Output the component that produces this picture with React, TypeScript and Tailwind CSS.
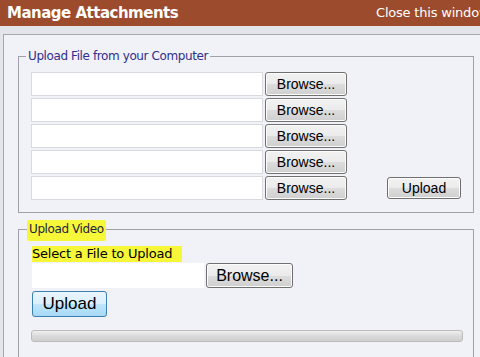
import React from "react";

const winBtn =
  "rounded-[3px] border border-[#707070] bg-[linear-gradient(#f2f2f2_0%,#ebebeb_50%,#dddddd_51%,#cfcfcf_100%)] text-black shadow-[inset_0_0_0_1px_#fcfcfc] flex items-center justify-center";

function Row() {
  return (
    <div className="flex gap-[2px] h-[24px]">
      <div className="w-[232px] h-full bg-white border border-[#d9d9e0]" />
      <div className={winBtn + " w-[82px] h-full text-[14px] font-['Liberation_Sans',sans-serif]"}>Browse...</div>
    </div>
  );
}

export default function App() {
  return (
    <div className="w-[480px] h-[357px] overflow-hidden bg-[#e4e4eb] font-['DejaVu_Sans',sans-serif]">
      <div className="h-[26px] bg-[#9c4b2c] flex items-center justify-between pl-[7px] overflow-hidden whitespace-nowrap">
        <span className="text-white font-bold text-[15px] tracking-[-0.5px]">Manage Attachments</span>
        <span className="text-white text-[13px] tracking-[-0.2px] w-[104px] overflow-hidden">Close this window</span>
      </div>
      <div className="mt-[8px] ml-[3px] h-[400px] border-l border-t border-[#a6a6ae] bg-[#f1f1f8] pt-[13px] pl-[14px]">
        <fieldset className="w-[456px] border border-[#a0a0a8] pl-[12px] pt-[8px] pb-[12px] pr-[12px]">
          <legend className="-ml-[5px] px-[2px] text-[12px] leading-[16px] text-[#2f2f8c] tracking-[-0.4px]">
            Upload File from your Computer
          </legend>
          <div className="flex items-end">
            <div className="flex flex-col gap-[2px]">
              <Row />
              <Row />
              <Row />
              <Row />
              <Row />
            </div>
            <div className={winBtn + " ml-[40px] mb-[1px] w-[74px] h-[22px] text-[14px] font-['Liberation_Sans',sans-serif]"}>Upload</div>
          </div>
        </fieldset>
        <fieldset className="mt-[8px] w-[456px] h-[200px] border border-[#a0a0a8] pl-[13px] pt-[8px] pr-[9px]">
          <legend className="-ml-[5px] text-[12px] leading-[16px] text-[#23233a] tracking-[-0.4px]">
            <span className="bg-[#f7f73a] px-[2px] pt-[2px] pb-[5px] rounded-[2px]">Upload Video</span>
          </legend>
          <div className="h-[18px] text-[13px] leading-[18px] text-black tracking-[-0.2px]">
            <span className="bg-[#f7f73a] pr-[10px] pb-[1px]">Select a File to Upload</span>
          </div>
          <div className="flex gap-[2px] h-[25px]">
            <div className="w-[172px] h-full bg-white" />
            <div className={winBtn + " w-[87px] h-full text-[16px] font-['Liberation_Sans',sans-serif]"}>Browse...</div>
          </div>
          <div className="mt-[3px] w-[75px] h-[26px] rounded-[3px] border border-[#3c7fb1] bg-[linear-gradient(#eaf6fd_0%,#d9f0fc_50%,#bee6fd_51%,#a7d9f5_100%)] flex items-center justify-center text-[17px] font-['Liberation_Sans',sans-serif] text-black">
            Upload
          </div>
          <div className="mt-[13px] -ml-[1px] w-[432px] h-[12px] rounded-[3px] border border-[#bcbcbc] bg-[linear-gradient(#f0f0f0,#dadada_50%,#cfcfcf)]" />
        </fieldset>
      </div>
    </div>
  );
}
